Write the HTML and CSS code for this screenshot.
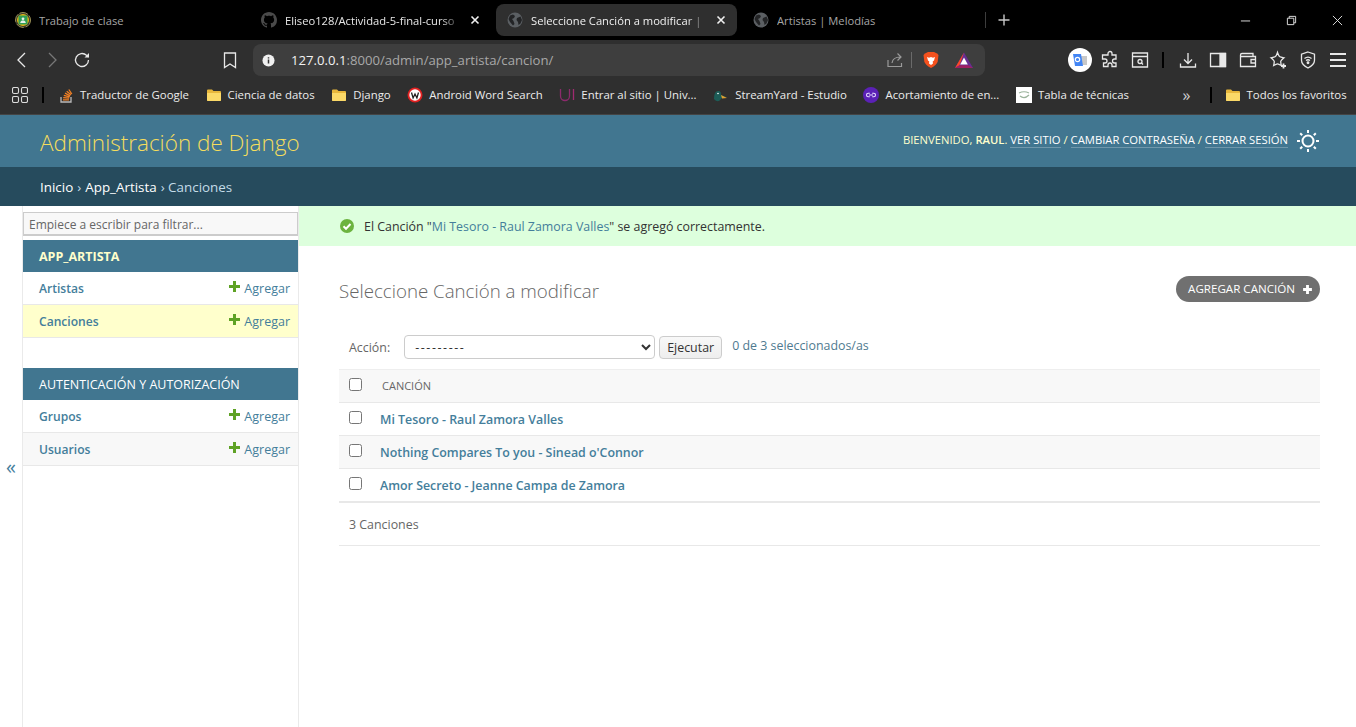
FILE: index.html
```html
<!DOCTYPE html>
<html lang="es">
	<head>
		<meta charset="UTF-8" />
		<meta name="viewport" content="width=device-width, initial-scale=1.0" />
		<title>Seleccione Canción a modificar | Sitio de administración de Django</title>
		<link rel="stylesheet" href="styles.css">
	</head>
	<body>
		<!-- browser chrome -->
		<div class="tabstrip">
			<div class="tab">
				<svg class="fav" viewBox="0 0 16 16"><circle cx="8" cy="8" r="7.5" fill="#3a3a30" stroke="#9a8f55" stroke-dasharray="9 1.5"/><circle cx="8" cy="8" r="6" fill="#e8b90f"/><rect x="3.5" y="3.5" width="9" height="9" rx="1" fill="#2f9e57"/><circle cx="8" cy="6.8" r="1.4" fill="#e8f2e8"/><path d="M5.2 11c.3-1.8 1.4-2.4 2.8-2.4s2.5.6 2.8 2.4z" fill="#e8f2e8"/></svg>
				<span class="tab-title dim">Trabajo de clase</span>
			</div>
			<div class="tab">
				<svg class="fav" viewBox="0 0 16 16"><path fill="#4a4a4a" d="M8 0C3.58 0 0 3.58 0 8c0 3.54 2.29 6.53 5.47 7.59.4.07.55-.17.55-.38 0-.19-.01-.82-.01-1.49-2.01.37-2.53-.49-2.69-.94-.09-.23-.48-.94-.82-1.13-.28-.15-.68-.52-.01-.53.63-.01 1.08.58 1.23.82.72 1.21 1.87.87 2.33.66.07-.52.28-.87.51-1.07-1.78-.2-3.64-.89-3.64-3.95 0-.87.31-1.59.82-2.15-.08-.2-.36-1.02.08-2.12 0 0 .67-.21 2.2.82.64-.18 1.32-.27 2-.27s1.36.09 2 .27c1.53-1.04 2.2-.82 2.2-.82.44 1.1.16 1.92.08 2.12.51.56.82 1.27.82 2.15 0 3.07-1.87 3.75-3.65 3.95.29.25.54.73.54 1.48 0 1.07-.01 1.93-.01 2.2 0 .21.15.46.55.38A8.01 8.01 0 0 0 16 8c0-4.42-3.58-8-8-8z"/></svg>
				<span class="tab-title fade">Eliseo128/Actividad-5-final-curso</span>
				<svg class="tab-close" viewBox="0 0 10 10"><path d="M1.5 1.5l7 7M8.5 1.5l-7 7"/></svg>
			</div>
			<div class="tab tab-active">
				<svg class="fav" viewBox="0 0 16 16"><use href="#globe"/></svg>
				<span class="tab-title fade">Seleccione Canción a modificar |</span>
				<svg class="tab-close" viewBox="0 0 10 10"><path d="M1.5 1.5l7 7M8.5 1.5l-7 7"/></svg>
			</div>
			<div class="tab">
				<svg class="fav" viewBox="0 0 16 16"><use href="#globe"/></svg>
				<span class="tab-title dim">Artistas | Melodías</span>
			</div>
			<span class="tab-sep"></span>
			<svg class="new-tab" viewBox="0 0 12 12"><path d="M6 .5v11M.5 6h11"/></svg>
			<div class="win-controls">
				<svg viewBox="0 0 12 12"><path d="M1 6.5h10"/></svg>
				<svg viewBox="0 0 12 12"><path d="M1.5 3.5h7v7h-7zM3.5 3.5v-2h7v7h-2"/></svg>
				<svg viewBox="0 0 12 12"><path d="M1 1l10 10M11 1L1 11"/></svg>
			</div>
		</div>

		<div class="toolbar">
			<svg class="tb tb-first" viewBox="0 0 20 20"><path d="M13 3l-7 7 7 7"/></svg>
			<svg class="tb off" viewBox="0 0 20 20"><path d="M7 3l7 7-7 7"/></svg>
			<svg class="tb" viewBox="0 0 20 20"><path d="M16.5 10a6.5 6.5 0 1 1-2-4.7L16.5 7"/><path d="M17 3v4.5h-4.5" fill="#e8e8e8" stroke="none"/></svg>
			<svg class="tb tb-mark" viewBox="0 0 20 20"><path d="M4.5 3h11v14.500l-5.500-3.500-5.500 3.500z"/></svg>
			<div class="urlbar">
				<svg class="info" viewBox="0 0 14 14"><circle cx="7" cy="7" r="6.500" fill="#f0f0f0"/><path d="M7 6v4.200M7 3.500v1.300" stroke="#333" stroke-width="1.600"/></svg>
				<span class="url"><b>127.0.0.1</b>:8000/admin/app_artista/cancion/</span>
				<svg class="url-share" viewBox="0 0 18 18"><path d="M2 9v6.500h13.500V12M6 12c.5-4 3-6 8.500-6M11.500 2.500l3.500 3.500-3.500 3.500"/></svg>
				<span class="url-sep"></span>
				<svg class="url-icon" viewBox="0 0 18 18"><path fill="#f4511e" d="M3 2.500L6 1h6l3 1.500 1.500 1.500-.8 6.500c-.4 2-2.700 4.500-6.700 6.500-4-2-6.300-4.500-6.700-6.500L1.500 4z"/><path fill="#fff" d="M5 6l2 .8L9 6l2 .8 2-.8-1 3.500-1.300 1 .3 2L9 14l-2-1.500.3-2-1.300-1z"/></svg>
				<svg class="url-icon url-bat" viewBox="0 0 18 18"><path fill="#662d91" d="M9 1.500l9 15.500H0z"/><path fill="#ff4724" d="M9 1.500L0 17l4.500-2.700z"/><path fill="#9e1f63" d="M0 17h18l-4.500-2.700h-9z"/><path fill="#fff" d="M9 6.500l3.800 7h-7.600z"/></svg>
			</div>
			<svg class="translate" viewBox="0 0 24 24"><circle cx="12" cy="12" r="12" fill="#fff"/><path fill="#c8c8c8" d="M12 8h7v9h-5z"/><path fill="#4285f4" d="M5 6h8l2 12H7z"/><circle cx="9.500" cy="11.500" r="2.200" fill="none" stroke="#fff" stroke-width="1.200"/></svg>
			<svg class="tb" viewBox="0 0 20 20"><path d="M8 3.500a2 2 0 0 1 4 0V5h4v4h-1.500a2 2 0 0 0 0 4H16v3.500h-4V15a2 2 0 0 0-4 0v1.500H3.500V13H5a2 2 0 0 0 0-4H2.500V5H8z"/></svg>
			<svg class="tb" viewBox="0 0 20 20"><path d="M2.500 3h15v14h-15zM2.500 6.500h15"/><circle cx="10" cy="11.500" r="2"/><path d="M11.500 13l1.500 1.500"/></svg>
			<span class="tb-sep"></span>
			<svg class="tb" viewBox="0 0 20 20"><path d="M10 3v10M6 9.500l4 4 4-4M2.500 13.500v3.500h15v-3.500"/></svg>
			<svg class="tb" viewBox="0 0 20 20"><path d="M2.500 3.500h15v13h-15z"/><rect x="12" y="3.500" width="5.500" height="13" fill="#e8e8e8"/></svg>
			<svg class="tb" viewBox="0 0 20 20"><path d="M2.500 6.500V5a1.500 1.500 0 0 1 1.500-1.500h11V6.500M2.500 6.500h15v10h-15zM17.500 9.500h-4.500v3.500h4.500"/></svg>
			<svg class="tb" viewBox="0 0 20 20"><path d="M9.500 2.500c.8 2.500 1.500 3.500 2 4 .8.600 2.200.9 4.500 1.300-1.800 1.500-3 2.600-3.200 3.400-.2.800.1 2.400.5 4.300-1.800-1.100-3-1.700-3.800-1.700s-2 .6-3.800 1.700c.4-1.900.7-3.500.5-4.300-.2-.8-1.400-1.900-3.200-3.400 2.300-.4 3.700-.7 4.500-1.300.5-.5 1.200-1.500 2-4z"/><path d="M15.500 13.500v5M13 16h5" stroke-width="1.800"/></svg>
			<svg class="tb" viewBox="0 0 20 20"><path d="M10 2l6.500 2.200v6c0 3.500-3 6-6.500 7.800-3.500-1.800-6.500-4.300-6.500-7.800v-6z"/><path d="M6.500 8.500c2-1.600 5-1.600 7 0M8 10.500c1.200-.9 2.800-.9 4 0"/><circle cx="10" cy="12.700" r=".8" fill="#e8e8e8"/></svg>
			<svg class="tb" viewBox="0 0 20 20"><path d="M2 4h16M2 10h16M2 16h16" stroke-width="1.800"/></svg>
		</div>

		<div class="bookmarks">
			<svg class="bm-apps" viewBox="0 0 16 16"><rect x=".5" y=".5" width="6" height="6" rx="1.500"/><rect x="9.500" y=".5" width="6" height="6" rx="1.500"/><rect x=".5" y="9.500" width="6" height="6" rx="1.500"/><rect x="9.500" y="9.500" width="6" height="6" rx="1.500"/></svg>
			<span class="bm-sep"></span>
			<div class="bm">
				<svg viewBox="0 0 16 16"><path d="M3 10v5h10v-5" fill="none" stroke="#bcbbbb" stroke-width="1.300"/><path d="M5 12.800h6M5.200 10.600l6 .6M5.800 8.400l5.800 1.500M7 6.200l5.200 2.600M8.700 4.200l4.300 3.600M10.800 2.500l3 4.500" stroke="#f48024" stroke-width="1.300"/></svg>
				Traductor de Google
			</div>
			<div class="bm"><svg viewBox="0 0 16 16"><use href="#folder"/></svg>Ciencia de datos</div>
			<div class="bm"><svg viewBox="0 0 16 16"><use href="#folder"/></svg>Django</div>
			<div class="bm">
				<svg viewBox="0 0 16 16"><circle cx="8" cy="8" r="7.500" fill="#e02020"/><circle cx="8" cy="8" r="5.700" fill="#fff"/><path d="M4.500 5.500l1.600 5.500L8 7l1.900 4 1.600-5.500" fill="none" stroke="#222" stroke-width="1.300"/></svg>
				Android Word Search
			</div>
			<div class="bm">
				<svg viewBox="0 0 16 16"><path d="M1.500 2v7a4.500 4.500 0 0 0 9 0V2" fill="none" stroke="#8c2a6c" stroke-width="1.300"/><path d="M14.500 2v11" fill="none" stroke="#a02a70" stroke-width="1.300"/></svg>
				Entrar al sitio | Univ...
			</div>
			<div class="bm">
				<svg viewBox="0 0 16 16"><path d="M1 12c0-4 1-8 4-8s3 2 3 4l5 2-4 1-3 3c-2 .5-4-.5-5-2z" fill="#1d5c57"/><path d="M8 8l6 3-5 .5z" fill="#e0a030"/><circle cx="5" cy="6.500" r=".8" fill="#fff"/></svg>
				StreamYard - Estudio
			</div>
			<div class="bm">
				<svg viewBox="0 0 16 16"><circle cx="8" cy="8" r="8" fill="#5b21b6"/><path d="M3.500 8a1.800 1.800 0 0 1 1.800-1.800h1.500M12.500 8a1.800 1.800 0 0 1-1.800 1.800H9.200M9.200 6.200h1.500A1.800 1.800 0 0 1 12.500 8M6.800 9.800H5.300A1.800 1.800 0 0 1 3.500 8M6 8h4" fill="none" stroke="#e8e0ff" stroke-width="1.100"/></svg>
				Acortamiento de en...
			</div>
			<div class="bm">
				<svg viewBox="0 0 16 16"><rect width="16" height="16" fill="#fff"/><path d="M3 6c3-1.500 7-1.500 10 0M4 9c2.500 2 6 2 9-1" fill="none" stroke="#9bb39b" stroke-width="1.200"/></svg>
				Tabla de técnicas
			</div>
			<span class="bm-more">»</span>
			<span class="bm-sep bm-sep-end"></span>
			<div class="bm"><svg viewBox="0 0 16 16"><use href="#folder"/></svg>Todos los favoritos</div>
		</div>

		<!-- django admin -->
		<div class="admin">
			<header class="branding">
				<a class="site-name">Administración de Django</a>
				<div class="user-tools">
					<span class="user-links">BIENVENIDO, <strong>RAUL</strong>. <a>VER SITIO</a> / <a>CAMBIAR CONTRASEÑA</a> / <a>CERRAR SESIÓN</a></span>
					<svg class="theme-toggle" viewBox="0 0 24 24"><circle cx="12" cy="12" r="5.500"/><path d="M12 1v3M12 20v3M1 12h3M20 12h3M4.200 4.200l2 2M17.800 17.800l2 2M4.200 19.800l2-2M17.800 6.200l2-2"/></svg>
				</div>
			</header>
			<div class="breadcrumbs"><a>Inicio</a> › <a>App_Artista</a> › Canciones</div>

			<div class="main">
				<div class="nav-toggle">«</div>
				<nav class="sidebar">
					<input class="nav-filter" type="search" placeholder="Empiece a escribir para filtrar...">
					<div class="module">
						<div class="module-head strong">APP_ARTISTA</div>
						<div class="model"><a>Artistas</a><a class="addlink"><i class="plus"></i>Agregar</a></div>
						<div class="model current"><a>Canciones</a><a class="addlink"><i class="plus"></i>Agregar</a></div>
					</div>
					<div class="module">
						<div class="module-head">AUTENTICACIÓN Y AUTORIZACIÓN</div>
						<div class="model"><a>Grupos</a><a class="addlink"><i class="plus"></i>Agregar</a></div>
						<div class="model alt"><a>Usuarios</a><a class="addlink"><i class="plus"></i>Agregar</a></div>
					</div>
				</nav>

				<div class="content-wrap">
					<div class="messagelist">
						<svg class="msg-icon" viewBox="0 0 14 14"><circle cx="7" cy="7" r="7" fill="#6cb33f"/><path d="M3.500 7.200l2.500 2.500 4.500-4.700" fill="none" stroke="#fff" stroke-width="2"/></svg>
						<span>El Canción "<a>Mi Tesoro - Raul Zamora Valles</a>" se agregó correctamente.</span>
					</div>
					<div class="content">
						<div class="content-head">
							<h1>Seleccione Canción a modificar</h1>
							<a class="addbtn"><span>AGREGAR CANCIÓN</span><svg viewBox="0 0 10 10"><path d="M5 1v8M1 5h8"/></svg></a>
						</div>
						<div class="actions">
							<label>Acción:</label>
							<select><option>---------</option></select>
							<button type="button">Ejecutar</button>
							<span class="counter">0 de 3 seleccionados/as</span>
						</div>
						<table class="results">
							<thead>
								<tr><th class="check"><input type="checkbox"></th><th class="col">CANCIÓN</th></tr>
							</thead>
							<tbody>
								<tr><td class="check"><input type="checkbox"></td><td><a>Mi Tesoro - Raul Zamora Valles</a></td></tr>
								<tr class="alt"><td class="check"><input type="checkbox"></td><td><a>Nothing Compares To you - Sinead o'Connor</a></td></tr>
								<tr><td class="check"><input type="checkbox"></td><td><a>Amor Secreto - Jeanne Campa de Zamora</a></td></tr>
							</tbody>
						</table>
						<p class="paginator">3 Canciones</p>
					</div>
				</div>
			</div>
		</div>

		<svg class="defs" width="0" height="0">
			<symbol id="globe" viewBox="0 0 16 16"><circle cx="8" cy="8" r="7.500" fill="#5b5f63"/><path d="M3 3.500l3-1 2 1.500-1 2-2 1 1.500 2 1 3-1.500 1.500L3 10l-1.500-3zM10 6l3.500-1.500L15 8l-1.500 3.500-2 1.500-.5-3-1.500-2z" fill="#232426"/></symbol>
			<symbol id="folder" viewBox="0 0 16 16"><path d="M1 3.500A1 1 0 0 1 2 2.500h4l1.500 1.500H14a1 1 0 0 1 1 1V13a1 1 0 0 1-1 1H2a1 1 0 0 1-1-1z" fill="#e8b73c"/><path d="M1 6h14v7a1 1 0 0 1-1 1H2a1 1 0 0 1-1-1z" fill="#fbd968"/></symbol>
		</svg>
	</body>
</html>
```

FILE: styles.css
```css
* {
	box-sizing: border-box;
	margin: 0;
	padding: 0;
}

html,
body {
	height: 100%;
	overflow: hidden;
}

body {
	display: flex;
	flex-direction: column;
	font-family: "Open Sans", sans-serif;
	font-size: 12.4px;
	background: #fff;
	color: #333;
}

.defs {
	position: absolute;
}

/* tabs */
.tabstrip {
	display: flex;
	align-items: center;
	height: 40px;
	padding-left: 4px;
	background: #000;
	font-size: 11.2px;
	flex: none;
}

.tab {
	display: flex;
	align-items: center;
	width: 241px;
	height: 32px;
	margin-right: 5px;
	padding: 0 11px;
	border-radius: 8px;
	color: #e6e6e6;
}

.tab-active {
	background: #2f2f2f;
	color: #f0f0f0;
}

.fav {
	width: 16px;
	height: 16px;
	margin-right: 8px;
	flex: none;
}

.tab-title {
	flex: 1;
	overflow: hidden;
	white-space: nowrap;
}

.tab-title.dim {
	color: #a6a6a6;
}

.tab-title.fade {
	-webkit-mask-image: linear-gradient(to right, #000 88%, transparent);
	mask-image: linear-gradient(to right, #000 88%, transparent);
}

.tab-close {
	width: 10px;
	height: 10px;
	margin: 0 0 0 8px;
	flex: none;
	fill: none;
	stroke: #f0f0f0;
	stroke-width: 1.600;
}

.tab-sep {
	width: 1px;
	height: 16px;
	margin-left: -3px;
	background: #3d3d3d;
}

.new-tab {
	width: 12px;
	height: 12px;
	margin-left: 12px;
	fill: none;
	stroke: #c8c8c8;
	stroke-width: 1.400;
}

.win-controls {
	display: flex;
	gap: 35px;
	margin-left: auto;
	padding-right: 13px;
}

.win-controls svg {
	width: 11px;
	height: 11px;
	fill: none;
	stroke: #e8e8e8;
}

/* toolbar */
.toolbar {
	display: flex;
	align-items: center;
	height: 40px;
	background: #2f2f2f;
	flex: none;
}

.tb {
	width: 20px;
	height: 20px;
	margin-right: 10px;
	flex: none;
	fill: none;
	stroke: #e8e8e8;
	stroke-width: 1.300;
}

.tb.off {
	stroke: #777;
}

.tb-first {
	margin-left: 12px;
}

.tb-mark {
	margin-left: 118px;
	margin-right: 13px;
}

.urlbar {
	display: flex;
	align-items: center;
	width: 732px;
	height: 32px;
	padding: 0 12px 0 9px;
	border-radius: 8px;
	background: #3e3e3e;
	flex: none;
}

.info {
	width: 13px;
	height: 13px;
	margin-right: 16px;
}

.url {
	flex: 1;
	font-size: 13.150px;
	color: #a8a8a8;
}

.url b {
	font-weight: 400;
	color: #f2f2f2;
}

.url-share {
	width: 18px;
	height: 18px;
	fill: none;
	stroke: #9a9a9a;
	stroke-width: 1.200;
}

.url-sep {
	width: 1px;
	height: 16px;
	margin: 0 10px 0 7px;
	background: #6a6a6a;
}

.url-icon {
	width: 18px;
	height: 18px;
}

.url-bat {
	margin-left: 15px;
}

.translate {
	width: 24px;
	height: 24px;
	margin-left: 83px;
	margin-right: 8px;
	flex: none;
}

.tb-sep {
	width: 2px;
	height: 16px;
	margin: 0 14px 0 2px;
	background: #000;
	flex: none;
}

/* bookmarks */
.bookmarks {
	display: flex;
	align-items: center;
	height: 34px;
	padding: 0 0 5px 12px;
	background: #2f2f2f;
	font-size: 11.400px;
	color: #ececec;
	flex: none;
}

.bm-apps {
	width: 16px;
	height: 16px;
	fill: none;
	stroke: #dcdcdc;
	stroke-width: 1.100;
	flex: none;
}

.bm-sep {
	width: 2px;
	height: 16px;
	margin: 0 14px;
	background: #000;
	flex: none;
}

.bm {
	display: flex;
	align-items: center;
	gap: 6px;
	margin-right: 16.600px;
	white-space: nowrap;
	flex: none;
}

.bm svg {
	width: 16px;
	height: 16px;
	flex: none;
}

.bm-more {
	margin-left: 37px;
	margin-right: 5px;
	font-size: 16px;
	color: #d0d0d0;
}

.bm-sep-end {
	margin-right: 13px;
}

/* django */
.admin {
	display: flex;
	flex-direction: column;
	flex: 1;
	min-height: 0;
	border-top: 1px solid #444;
}

.branding {
	display: flex;
	align-items: center;
	justify-content: space-between;
	height: 52px;
	padding: 0 36px 0 40px;
	background: #417690;
	flex: none;
}

.site-name {
	padding-top: 2px;
	font-size: 22.500px;
	font-weight: 300;
	color: #f5dd5d;
}

.user-tools {
	display: flex;
	align-items: center;
	font-size: 11.250px;
	color: #ffc;
	white-space: nowrap;
}

.user-links {
	margin-top: -3px;
}

.user-tools strong {
	font-weight: 600;
}

.user-tools a {
	color: #fff;
	border-bottom: 1px solid rgba(255, 255, 255, 0.25);
}

.theme-toggle {
	width: 24px;
	height: 24px;
	margin-left: 8px;
	fill: none;
	stroke: #fff;
	stroke-width: 2;
}

.breadcrumbs {
	display: flex;
	align-items: center;
	gap: 4px;
	height: 39px;
	padding-left: 40px;
	background: #264b5d;
	font-size: 13.400px;
	color: #c4dce8;
	flex: none;
}

.breadcrumbs a {
	color: #fff;
}

.main {
	display: flex;
	flex: 1;
	min-height: 0;
}

.nav-toggle {
	width: 22px;
	padding-top: 249px;
	text-align: center;
	font-size: 20px;
	line-height: 24px;
	color: #447e9b;
	flex: none;
}

.sidebar {
	width: 277px;
	border-left: 1px solid #eaeaea;
	border-right: 1px solid #eaeaea;
	padding-top: 6px;
	flex: none;
}

.nav-filter {
	display: block;
	width: 100%;
	height: 24px;
	margin-bottom: 4px;
	padding: 1px 5px 0;
	border: 1px solid #ccc;
	border-width: 1px 1px 2px 1px;
	outline: none;
	background: #f8f8f8;
	font: 12px "Open Sans", sans-serif;
	color: #333;
}

.nav-filter::placeholder {
	color: #666;
	opacity: 1;
}

.module {
	margin-bottom: 30px;
}

.module-head {
	display: flex;
	align-items: center;
	height: 32px;
	padding-left: 16px;
	background: #417690;
	font-size: 12.500px;
	color: #fff;
}

.module-head.strong {
	font-weight: 700;
	color: #ffc;
}

.model {
	display: flex;
	align-items: center;
	justify-content: space-between;
	height: 33px;
	padding: 0 8px 0 16px;
	border-bottom: 1px solid #e8e8e8;
	font-size: 12.100px;
	font-weight: 600;
	color: #447e9b;
}

.model.current {
	background: #ffc;
}

.model.alt {
	background: #f8f8f8;
}

.addlink {
	display: flex;
	align-items: center;
	font-size: 12.500px;
	font-weight: 400;
}

.plus {
	width: 11px;
	height: 11px;
	margin: -4px 4px 0 0;
	background:
		linear-gradient(#5fa225, #5fa225) center / 100% 3px no-repeat,
		linear-gradient(#5fa225, #5fa225) center / 3px 100% no-repeat;
}

.content-wrap {
	flex: 1;
	min-width: 0;
}

.messagelist {
	display: flex;
	align-items: center;
	gap: 10px;
	height: 40px;
	padding-left: 41px;
	background: #dfd;
	color: #333;
}

.messagelist a {
	color: #447e9b;
}

.msg-icon {
	width: 14px;
	height: 14px;
}

.content {
	padding: 30px 36px 0 40px;
}

.content-head {
	display: flex;
	align-items: center;
	justify-content: space-between;
	height: 30px;
	margin-bottom: 29px;
}

h1 {
	margin-top: -2px;
	font-size: 18.700px;
	font-weight: 300;
	color: #666;
}

.addbtn {
	display: flex;
	align-items: center;
	gap: 7px;
	height: 26px;
	margin-top: -4px;
	padding: 0 7px 0 12px;
	border-radius: 13px;
	background: #707070;
	font-size: 11.600px;
	color: #fff;
}

.addbtn span {
	margin-top: -1px;
}

.addbtn svg {
	width: 11px;
	height: 11px;
	fill: none;
	stroke: #fff;
	stroke-width: 2.600;
}

.actions {
	display: flex;
	align-items: center;
	height: 24px;
	margin-bottom: 11px;
	padding-left: 10px;
	color: #666;
}

.actions select {
	width: 251px;
	height: 24px;
	margin-left: 14px;
	padding-left: 6px;
	border: 1px solid #ccc;
	border-radius: 4px;
	background: #fff;
	font: 12.400px "Open Sans", sans-serif;
	letter-spacing: 1.600px;
	color: #333;
}

.actions button {
	width: 63px;
	height: 23px;
	margin-left: 4px;
	border: 1px solid #ccc;
	border-radius: 4px;
	background: linear-gradient(#f8f8f8, #eee);
	font: 12.400px "Open Sans", sans-serif;
	color: #333;
}

.counter {
	margin: -3px 0 0 10px;
	color: #4f7a90;
}

.results {
	width: 100%;
	border-collapse: collapse;
	margin-top: -1px;
	border-top: 1px solid #eee;
}

.results th {
	height: 33px;
	padding-bottom: 2px;
	background: #f8f8f8;
	border-bottom: 1px solid #e8e8e8;
	text-align: left;
}

.results td {
	height: 33px;
	border-bottom: 1px solid #e8e8e8;
	font-weight: 600;
	font-size: 12.400px;
	color: #447e9b;
}

.results tbody tr:last-child td {
	padding-top: 1px;
	border-bottom: 2px solid #e8e8e8;
}

.results tr.alt td {
	background: #f8f8f8;
}

.results .check {
	width: 41px;
	padding: 0 0 3px 10px;
}

.results input {
	display: block;
	width: 13px;
	height: 13px;
	margin: 0;
}

.results .col {
	font-size: 11px;
	font-weight: 500;
	color: #666;
	padding-left: 2px;
}

.paginator {
	height: 43px;
	padding-left: 10px;
	line-height: 44px;
	border-bottom: 1px solid #e8e8e8;
	color: #666;
}
```
